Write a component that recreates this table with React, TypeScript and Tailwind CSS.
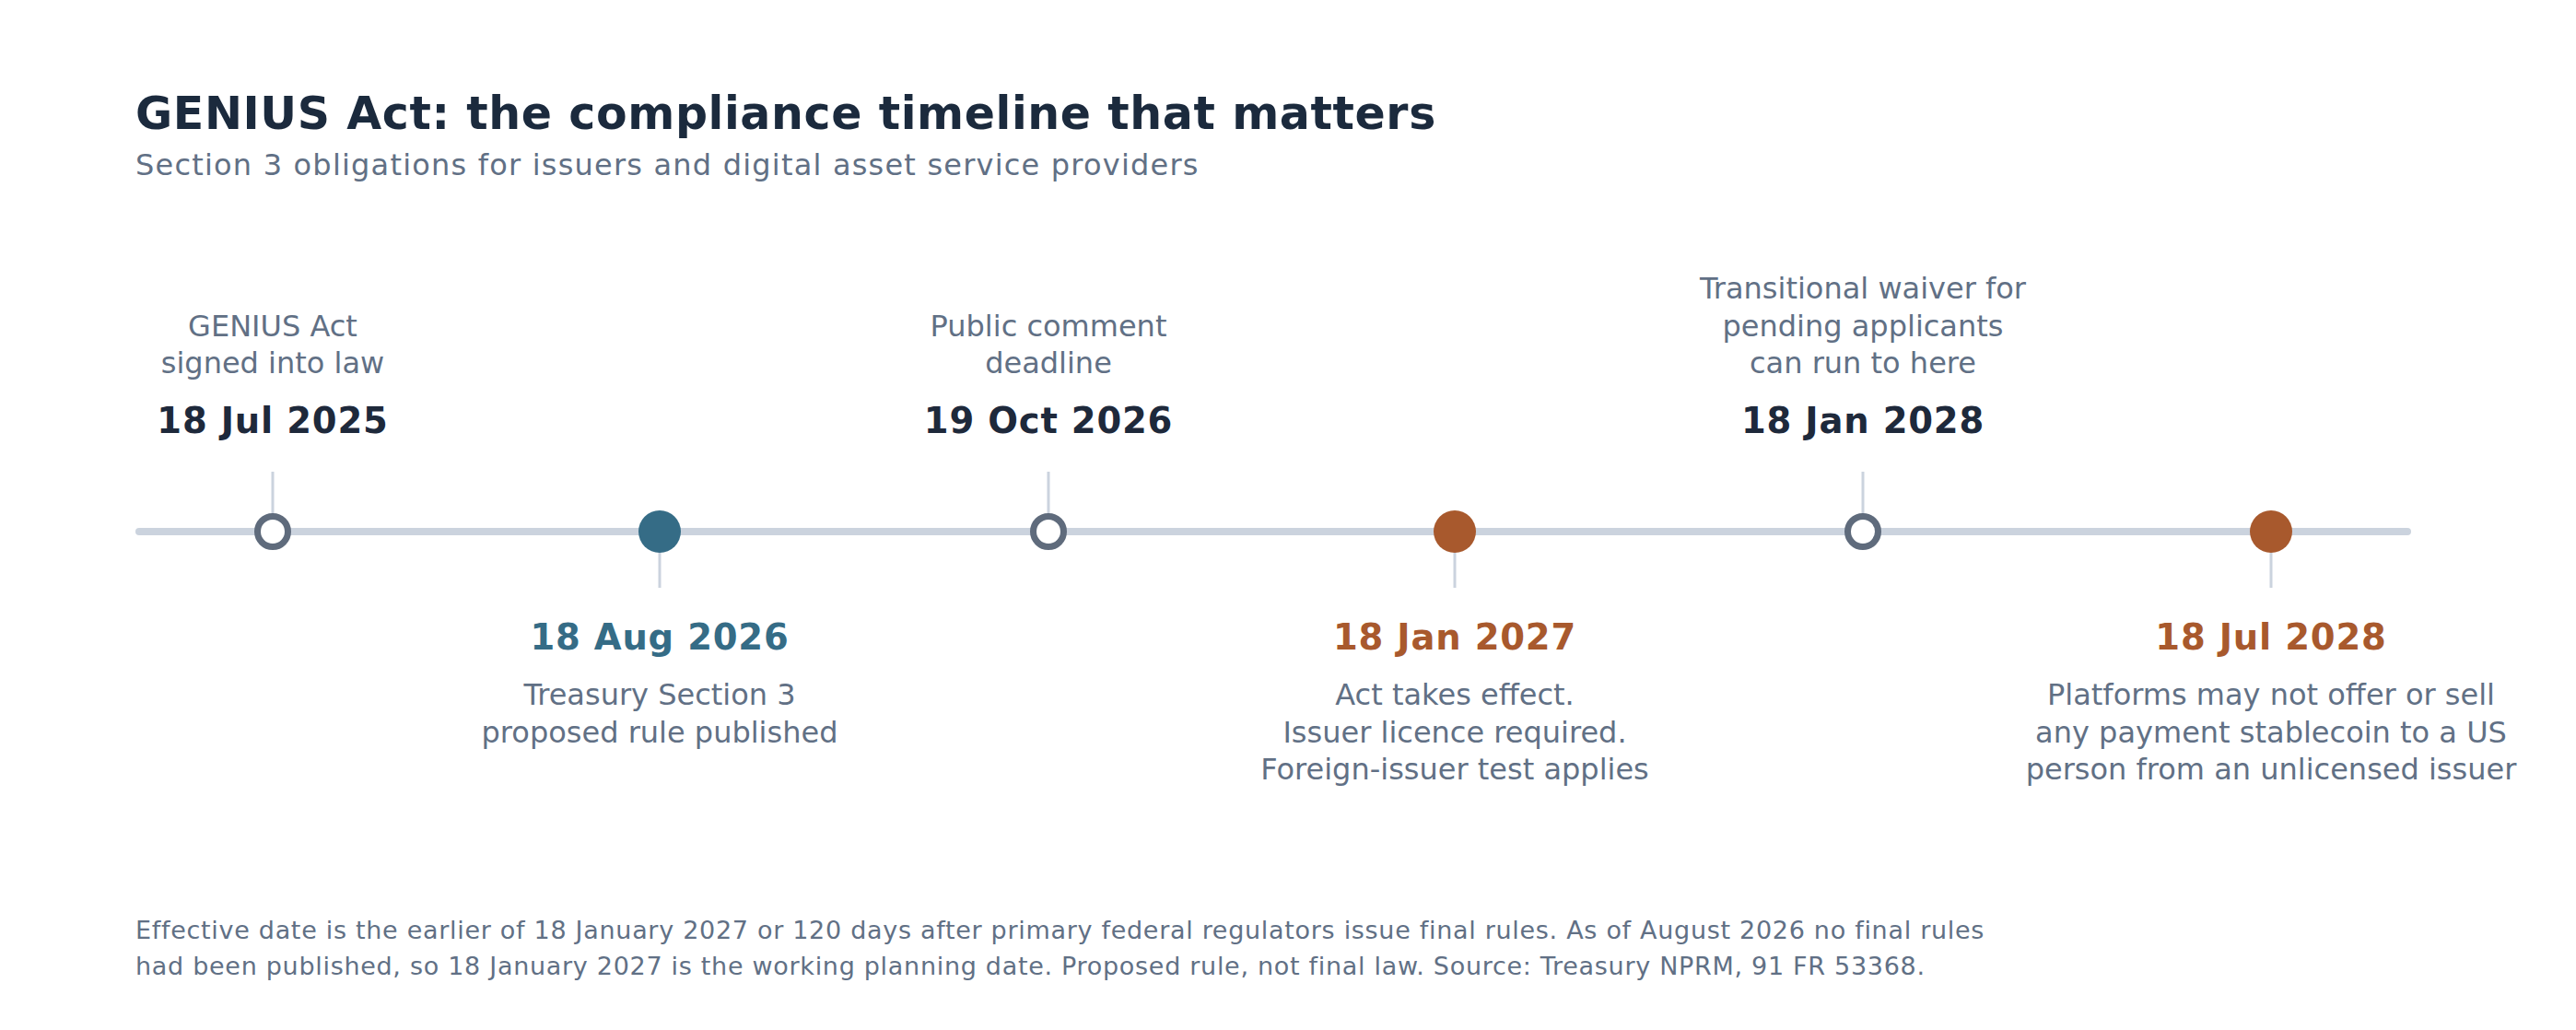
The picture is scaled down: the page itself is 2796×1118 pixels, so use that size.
import React from "react";

type Ev = {
  x: number;
  pos: string;
  side: "up" | "down";
  kind: "hollow" | "teal" | "orange";
  date: string;
  dateCls: string;
  lines: string[];
};

const EVENTS: Ev[] = [
  {
    x: 296,
    pos: "left-[296px]",
    side: "up",
    kind: "hollow",
    date: "18 Jul 2025",
    dateCls: "text-[#1e293b]",
    lines: ["GENIUS Act", "signed into law"],
  },
  {
    x: 716,
    pos: "left-[716px]",
    side: "down",
    kind: "teal",
    date: "18 Aug 2026",
    dateCls: "text-[#356c86]",
    lines: ["Treasury Section 3", "proposed rule published"],
  },
  {
    x: 1138,
    pos: "left-[1138px]",
    side: "up",
    kind: "hollow",
    date: "19 Oct 2026",
    dateCls: "text-[#1e293b]",
    lines: ["Public comment", "deadline"],
  },
  {
    x: 1579,
    pos: "left-[1579px]",
    side: "down",
    kind: "orange",
    date: "18 Jan 2027",
    dateCls: "text-[#a8592d]",
    lines: ["Act takes effect.", "Issuer licence required.", "Foreign-issuer test applies"],
  },
  {
    x: 2022,
    pos: "left-[2022px]",
    side: "up",
    kind: "hollow",
    date: "18 Jan 2028",
    dateCls: "text-[#1e293b]",
    lines: ["Transitional waiver for", "pending applicants", "can run to here"],
  },
  {
    x: 2465,
    pos: "left-[2465px]",
    side: "down",
    kind: "orange",
    date: "18 Jul 2028",
    dateCls: "text-[#a8592d]",
    lines: [
      "Platforms may not offer or sell",
      "any payment stablecoin to a US",
      "person from an unlicensed issuer",
    ],
  },
];

function Chart() {
  return (
    <svg width="2796" height="600" viewBox="0 0 2796 600" className="absolute left-0 top-0">
      <line x1="151" y1="297" x2="2613" y2="297" stroke="#cbd3de" strokeWidth="8" strokeLinecap="round" />
      {EVENTS.map((e) => (
        <g key={e.date}>
          {e.side === "up" ? (
            <line x1={e.x} y1="232" x2={e.x} y2="297" stroke="#cbd3de" strokeWidth="3" />
          ) : (
            <line x1={e.x} y1="297" x2={e.x} y2="358" stroke="#cbd3de" strokeWidth="3" />
          )}
          {e.kind === "hollow" ? (
            <circle cx={e.x} cy="297" r="16.5" fill="#ffffff" stroke="#5f6b7c" strokeWidth="7" />
          ) : (
            <circle cx={e.x} cy="297" r="23" fill={e.kind === "teal" ? "#356c86" : "#a8592d"} />
          )}
        </g>
      ))}
    </svg>
  );
}

export default function App() {
  return (
    <div className="w-[2796px] h-[1118px] bg-white overflow-hidden font-['DejaVu_Sans',sans-serif] flex flex-col">
      <div className="pl-[147px] pt-[99px] flex flex-col">
        <h1 className="text-[49px] leading-[49px] font-bold tracking-[0.6px] text-[#1b2a3d] whitespace-nowrap">
          GENIUS Act: the compliance timeline that matters
        </h1>
        <p className="mt-[11px] text-[32px] leading-[40px] tracking-[1.2px] text-[#617085] whitespace-nowrap">
          Section 3 obligations for issuers and digital asset service providers
        </p>
      </div>

      <div className="relative mt-[81px] w-[2796px] h-[600px] shrink-0">
        <Chart />
        {EVENTS.map((e) =>
          e.side === "up" ? (
            <div
              key={e.date}
              className={`absolute bottom-[400px] ${e.pos} -translate-x-1/2 flex flex-col items-center whitespace-nowrap`}
            >
              {e.lines.map((l) => (
                <span key={l} className="text-[32px] leading-[40.5px] text-[#617085]">
                  {l}
                </span>
              ))}
              <span className={`mt-[19.5px] text-[38.5px] leading-[46px] font-bold tracking-[0.8px] ${e.dateCls}`}>
                {e.date}
              </span>
            </div>
          ) : (
            <div
              key={e.date}
              className={`absolute top-[389px] ${e.pos} -translate-x-1/2 flex flex-col items-center whitespace-nowrap`}
            >
              <span className={`text-[38.5px] leading-[46px] font-bold tracking-[0.8px] ${e.dateCls}`}>{e.date}</span>
              <div className="mt-[19px] flex flex-col items-center">
                {e.lines.map((l) => (
                  <span key={l} className="text-[32px] leading-[40.5px] text-[#617085]">
                    {l}
                  </span>
                ))}
              </div>
            </div>
          )
        )}
      </div>

      <div className="pl-[147px] mt-[111px] text-[27px] leading-[38.5px] tracking-[0.7px] text-[#617085]">
        <p className="whitespace-nowrap">
          Effective date is the earlier of 18 January 2027 or 120 days after primary federal regulators issue final
          rules. As of August 2026 no final rules
        </p>
        <p className="whitespace-nowrap">
          had been published, so 18 January 2027 is the working planning date. Proposed rule, not final law. Source:
          Treasury NPRM, 91 FR 53368.
        </p>
      </div>
    </div>
  );
}
